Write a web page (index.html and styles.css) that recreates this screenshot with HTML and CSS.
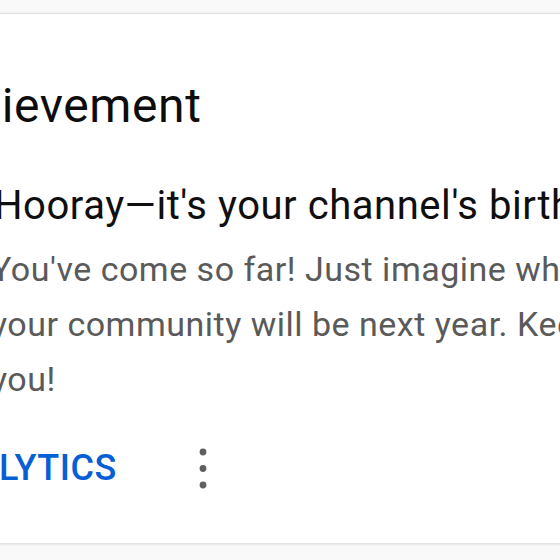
FILE: index.html
```html
<!DOCTYPE html>
<html lang="en">
<head>
<meta charset="utf-8">
<title>Achievement</title>
<link rel="stylesheet" href="styles.css">
</head>
<body>
  <div class="page">
    <section class="card">
      <div class="card-main">
        <h2 class="card-title">Achievement</h2>
        <div class="card-body">
          <div class="thumb"></div>
          <div class="content">
            <h3 class="headline">Hooray—it's your channel's birthday!</h3>
            <p class="message">You've come so far! Just imagine where<br>your community will be next year. Keep it up, we're proud of<br>you!</p>
          </div>
        </div>
      </div>
      <div class="actions">
        <button class="text-button" type="button">Analytics</button>
        <button class="icon-button" type="button" aria-label="More actions">
          <svg viewBox="0 0 10 44" width="10" height="44" aria-hidden="true">
            <circle cx="5" cy="6" r="3.4"/>
            <circle cx="5" cy="22.5" r="3.4"/>
            <circle cx="5" cy="39" r="3.4"/>
          </svg>
        </button>
      </div>
    </section>
  </div>
</body>
</html>
```
FILE: styles.css
```css
html, body {
  margin: 0;
  padding: 0;
  background: #f9f9f9;
  overflow: hidden;
  font-family: Roboto, "Noto Sans", Arial, sans-serif;
}

.page {
  width: 560px;
  height: 560px;
  overflow: hidden;
  padding-top: 13px;
  box-sizing: border-box;
}

.card {
  margin-left: -133px;
  width: 1400px;
  background: #fff;
  border-top: 1px solid #e3e3e3;
  border-bottom: 1px solid #e3e3e3;
  box-shadow: 0 1px 2px rgba(0, 0, 0, 0.08), 0 -1px 2px rgba(0, 0, 0, 0.04);
  padding: 64px 24px 32px;
  white-space: nowrap;
}

.card-main {
  padding-left: 28px;
}

.card-title {
  margin: 0 0 0 -2px;
  font-size: 48px;
  line-height: 56px;
  font-weight: 400;
  letter-spacing: 0.6px;
  color: #0d0d0d;
}

.card-body {
  display: flex;
  gap: 24px;
  margin-top: 48px;
}

.thumb {
  width: 48px;
  flex: none;
}

.headline {
  margin: 0 0 0 3px;
  font-size: 40px;
  line-height: 48px;
  font-weight: 400;
  letter-spacing: 0.55px;
  color: #0f0f0f;
}

.message {
  margin: 12px 0 0;
  font-size: 34px;
  line-height: 55px;
  letter-spacing: 0.5px;
  color: #5a5a5a;
}

.actions {
  display: flex;
  align-items: center;
  height: 86px;
  margin: 18px 0 0 -5px;
}

.text-button {
  border: 0;
  background: none;
  padding: 0 38px;
  height: 86px;
  font-family: inherit;
  font-size: 36px;
  font-weight: 500;
  letter-spacing: 0.5px;
  text-transform: uppercase;
  color: #065fd4;
}

.icon-button {
  border: 0;
  background: none;
  padding: 0;
  width: 96px;
  height: 86px;
  display: flex;
  align-items: center;
  justify-content: center;
}

.icon-button svg {
  fill: #606060;
}
```
